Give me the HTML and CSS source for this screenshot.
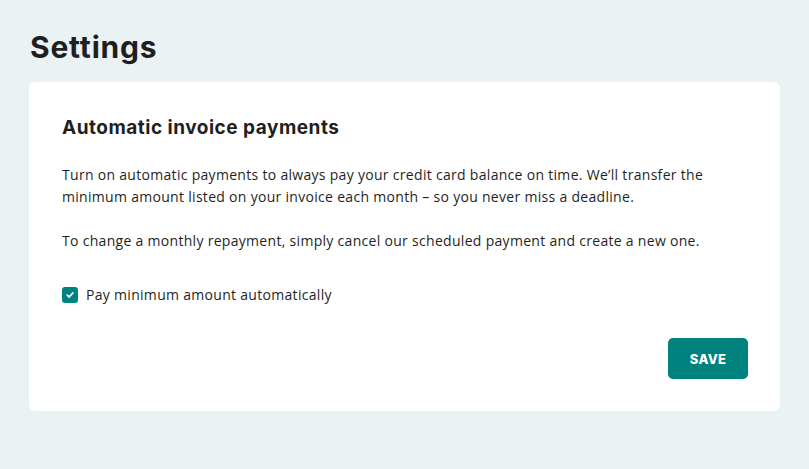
FILE: index.html
```html
<!DOCTYPE html>
<html lang="en">
<head>
  <meta charset="UTF-8" />
  <meta name="viewport" content="width=device-width, initial-scale=1.0" />
  <link rel="stylesheet" href="styles.css">
  <title>Settings</title>
</head>
<body>
  <main class="page">
    <h1>Settings</h1>

    <section class="card">
      <h2>Automatic invoice payments</h2>
      <p>Turn on automatic payments to always pay your credit card balance on time. We’ll transfer the minimum amount listed on your invoice each month – so you never miss a deadline.</p>
      <p>To change a monthly repayment, simply cancel our scheduled payment and create a new one.</p>

      <label class="check">
        <span class="box">
          <svg width="10" height="10" viewBox="0 0 10 10"><path d="M2.2 5.2 L4.2 7 L7.8 3" fill="none" stroke="#fff" stroke-width="1.8" stroke-linecap="round" stroke-linejoin="round"/></svg>
        </span>
        Pay minimum amount automatically
      </label>

      <div class="actions">
        <button type="button" class="save">SAVE</button>
      </div>
    </section>
  </main>
</body>
</html>
```

FILE: styles.css
```css
html, body {
  margin: 0;
  background: #ebf2f4;
}
body {
  font-family: "Open Sans", Arial, sans-serif;
  color: #1f1f1f;
}
.page {
  padding: 29px 29px 0 29px;
}
h1 {
  font-family: Inter, "Liberation Sans", sans-serif;
  font-size: 30px;
  font-weight: 700;
  letter-spacing: 0.8px;
  margin: 0 0 16px 1px;
  line-height: 37px;
}
.card {
  background: #fff;
  border-radius: 6px;
  padding: 32px 32px 32px 33px;
}
h2 {
  font-family: Inter, "Liberation Sans", sans-serif;
  font-size: 19px;
  font-weight: 700;
  letter-spacing: 0.5px;
  margin: 0 0 22px;
  line-height: 28px;
}
p {
  font-size: 14px;
  line-height: 22px;
  letter-spacing: 0.3px;
  margin: 0 0 22px;
  max-width: 660px;
}
.check {
  display: flex;
  align-items: center;
  gap: 8px;
  font-size: 14px;
  letter-spacing: 0.3px;
  margin-top: 33px;
}
.box {
  width: 16px;
  height: 16px;
  border-radius: 3px;
  background: #00827f;
  display: flex;
  align-items: center;
  justify-content: center;
}
.actions {
  display: flex;
  justify-content: flex-end;
  margin-top: 34px;
}
.save {
  width: 80px;
  height: 41px;
  border: none;
  border-radius: 5px;
  background: #00827f;
  color: #fff;
  font-family: Inter, "Liberation Sans", sans-serif;
  font-size: 13px;
  font-weight: 800;
  letter-spacing: 0.3px;
}
```
